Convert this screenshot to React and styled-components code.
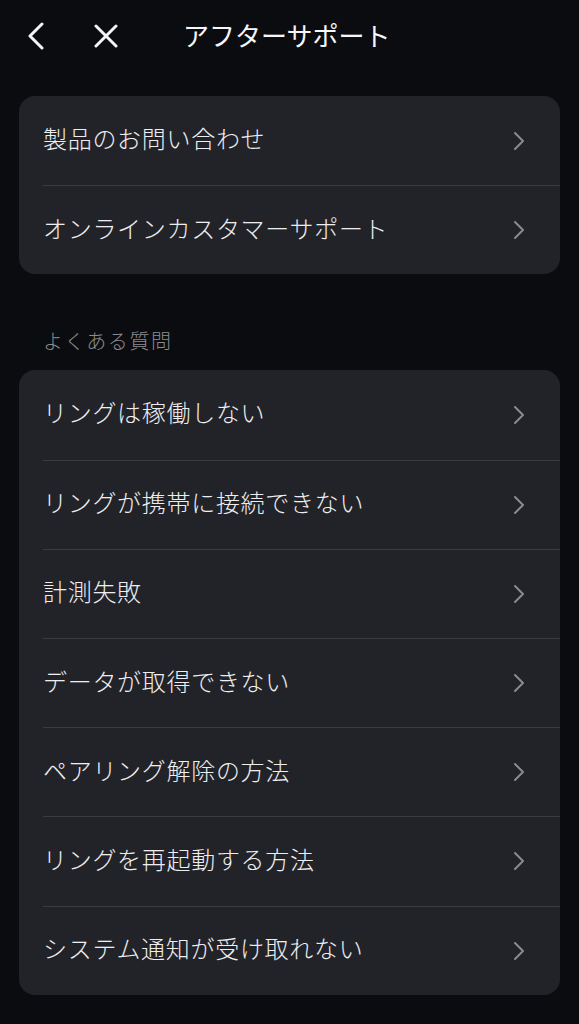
import React from "react";
import styled, { createGlobalStyle } from "styled-components";

const GlobalStyle = createGlobalStyle`
  html, body {
    margin: 0;
    padding: 0;
    background: #0b0c10;
  }
  body {
    font-family: "Noto Sans CJK JP", "Noto Sans", sans-serif;
    color: #f2f2f4;
  }
`;

const Page = styled.div`
  width: 579px;
  min-height: 1024px;
  background: #0b0c10;
  box-sizing: border-box;
  padding: 0 19px;
`;

const Header = styled.header`
  height: 72px;
  display: flex;
  align-items: center;
  margin-bottom: 24px;
`;

const IconButton = styled.button`
  background: none;
  border: 0;
  padding: 0;
  display: flex;
  align-items: center;
  justify-content: center;
  color: #f4f4f6;
  width: ${(p) => p.$w}px;
  margin-left: ${(p) => p.$ml}px;
`;

const Title = styled.h1`
  margin: 0 0 3px 64px;
  font-size: 26px;
  line-height: 1;
  font-weight: 400;
  letter-spacing: 0;
  color: #f6f6f8;
`;

const Card = styled.ul`
  list-style: none;
  margin: 0;
  padding: 0;
  background: #222328;
  border-radius: 16px;
  overflow: hidden;
`;

const Row = styled.li`
  height: 89.2px;
  display: flex;
  align-items: center;
  margin-left: 24px;
  padding-right: 35px;
  border-top: ${(p) => (p.$first ? "none" : "1px solid #3a3b40")};
  box-sizing: border-box;
`;

const RowText = styled.span`
  flex: 1;
  font-size: 24px;
  line-height: 1;
  padding-bottom: 5px;
  font-weight: 300;
  color: #eeeef0;
  letter-spacing: 0.7px;
`;

const SectionLabel = styled.div`
  margin: 52px 0 0 24px;
  height: 44px;
  font-size: 20px;
  font-weight: 300;
  color: #8b8c91;
  letter-spacing: 1.6px;
`;

const Chevron = () => (
  <svg width="12" height="20" viewBox="0 0 12 20" fill="none">
    <path d="M2 2 L10 10 L2 18" stroke="#8a8b90" strokeWidth="2" strokeLinecap="round" strokeLinejoin="round" />
  </svg>
);

const BackIcon = () => (
  <svg width="20" height="28" viewBox="0 0 20 28" fill="none">
    <path d="M16 2 L4 14 L16 26" stroke="#f4f4f6" strokeWidth="3" strokeLinecap="round" strokeLinejoin="round" />
  </svg>
);

const CloseIcon = () => (
  <svg width="24" height="24" viewBox="0 0 24 24" fill="none">
    <path d="M2 2 L22 22 M22 2 L2 22" stroke="#f4f4f6" strokeWidth="3" strokeLinecap="round" />
  </svg>
);

const contact = ["製品のお問い合わせ", "オンラインカスタマーサポート"];
const faq = [
  "リングは稼働しない",
  "リングが携帯に接続できない",
  "計測失敗",
  "データが取得できない",
  "ペアリング解除の方法",
  "リングを再起動する方法",
  "システム通知が受け取れない",
];

const List = ({ items }) => (
  <Card>
    {items.map((t, i) => (
      <Row key={t} $first={i === 0}>
        <RowText>{t}</RowText>
        <Chevron />
      </Row>
    ))}
  </Card>
);

export default function App() {
  return (
    <Page>
      <GlobalStyle />
      <Header>
        <IconButton $w={22} $ml={6}>
          <BackIcon />
        </IconButton>
        <IconButton $w={26} $ml={46}>
          <CloseIcon />
        </IconButton>
        <Title>アフターサポート</Title>
      </Header>
      <List items={contact} />
      <SectionLabel>よくある質問</SectionLabel>
      <List items={faq} />
    </Page>
  );
}
